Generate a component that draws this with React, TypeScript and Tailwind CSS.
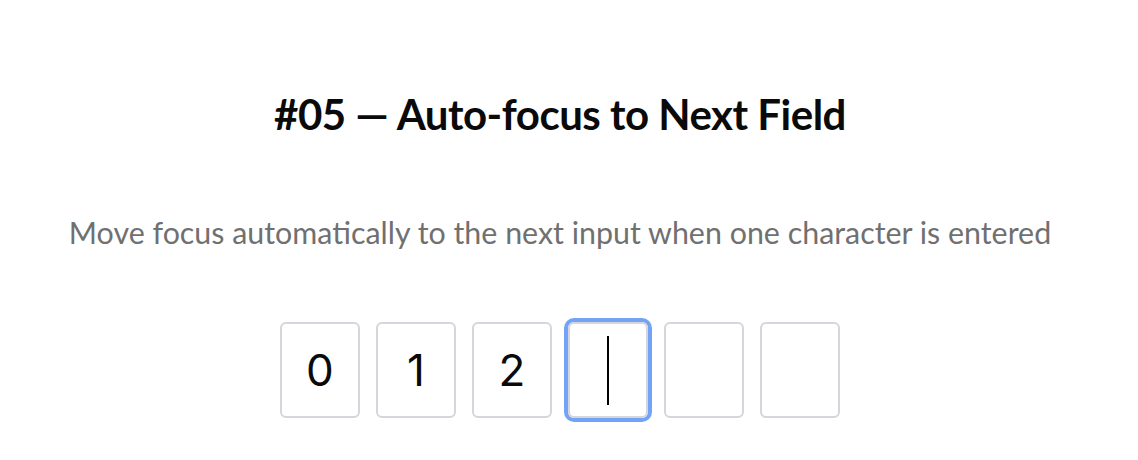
export default function App() {
  const digits = ['0', '1', '2', '', '', ''];
  const active = 3;

  return (
    <div className="w-[1120px] h-[460px] bg-white flex flex-col items-center" style={{ fontFamily: 'Lato, "Noto Sans", sans-serif' }}>
      <h1 className="mt-[86px] text-[42px] leading-[56px] font-bold text-[#0a0a0a] tracking-[-0.5px]">
        #05 — Auto-focus to Next Field
      </h1>
      <p className="mt-[70px] text-[30.4px] leading-[40px] text-[#707070]">
        Move focus automatically to the next input when one character is entered
      </p>
      <div className="mt-[70px] flex gap-4">
        {digits.map((d, i) => (
          <div
            key={i}
            className={
              'w-20 h-24 rounded-md border-2 border-[#d4d6db] flex items-center justify-center ' +
              (i === active ? 'ring-4 ring-[#73a3f7]' : '')
            }
          >
            {i === active ? (
              <div className="w-[2px] h-[69px] bg-black" />
            ) : (
              <span className="text-[44px] text-[#0a0a0a]" style={{ fontFamily: 'Inter, sans-serif' }}>
                {d}
              </span>
            )}
          </div>
        ))}
      </div>
    </div>
  );
}
